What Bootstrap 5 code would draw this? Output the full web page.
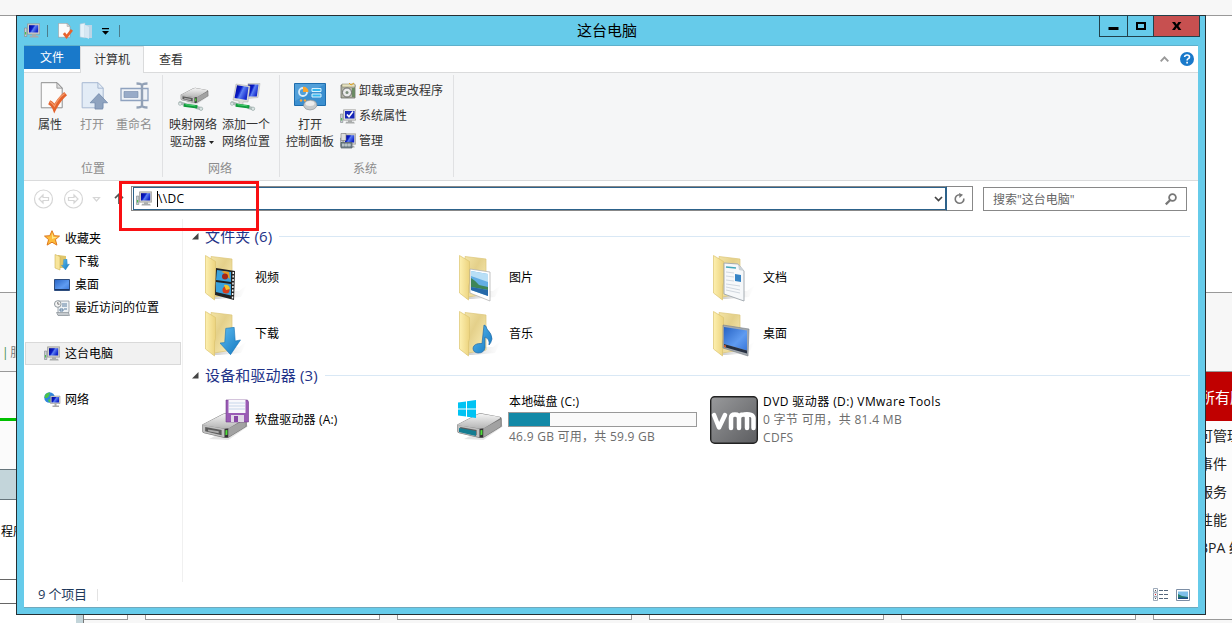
<!DOCTYPE html>
<html lang="zh-CN">
<head>
<meta charset="utf-8">
<title>这台电脑</title>
<link rel="stylesheet" href="https://cdn.jsdelivr.net/npm/bootstrap@5.3.0/dist/css/bootstrap.min.css">
<script src="https://cdn.jsdelivr.net/npm/bootstrap@5.3.0/dist/js/bootstrap.bundle.min.js"></script>
<style>
body{width:1232px;height:623px;overflow:hidden;position:relative;background:#fff;font:12px/17px "Open Sans","Noto Sans CJK SC",sans-serif;color:#000;white-space:nowrap}
svg{display:block;flex:none;overflow:visible}
/* server manager behind the window */
.desk{height:623px;overflow:hidden}
.desk-top{height:16px;background:#f7f7f7;border-bottom:1px solid #999;flex:none}
.rail{width:84px;border-right:1px solid #777}
.rail>div,.tile-r>div{flex:none}
.rail-foot{height:20px;margin-left:76px;background:#c3d5da}
.tiles{background:#f7f7f7;gap:17px;min-width:0;overflow:hidden}
.tile-box{width:235px;flex:none;background:#fff;border:1px solid #999;height:604px}
.tile-r{width:26px;position:absolute;right:0;top:16px;height:607px;background:#f7f7f7;overflow:hidden;font-size:14px;line-height:28px;color:#222}
.tile-r .shift{margin-left:-7px}
/* window */
.win{position:absolute;left:16px;top:15px;width:1190px;height:600px;background:#66cbea;border:1px solid #262f33}
.titlebar{height:30px}
.qat{position:absolute;left:7px;top:6px;height:18px}
.wtitle{font-size:15px;line-height:28px;padding-right:8px}
.capt{position:absolute;right:5px;top:-1px;height:22px}
.capt>div{border:1px solid #21414b;margin-left:-1px}
.client{margin:0 7px;height:561px;background:#fff;box-shadow:0 -1px 0 #5eb0cb,0 1px 0 #6fa9bd}
.tabs{height:27px;border-bottom:1px solid #dadbdc;color:#333}
.tab-file{width:56px;height:23px;background:#1979ca;color:#fff;line-height:23px}
.tab-on{width:64px;height:27px;background:#f5f6f7;border:1px solid #dadbdc;border-bottom:0;line-height:25px}
.ribbon{height:108px;background:#f5f6f7;border-bottom:1px solid #dadbdc;color:#333}
.rgroup{border-right:1px solid #e0e1e3;margin:2px 0 3px;height:102px;position:relative}
.rgroup .cap{color:#8c8c8c;height:17px;margin-top:auto}
.rbtn{line-height:17px}
.rbtn svg{margin-bottom:5px}
.dis{color:#8f8f8f}
.addr{height:38px;padding-top:5px}
.abox{width:816px;height:25px;border:1px solid #888;border-right-color:#2c628b}
.abox .inn{border:1px solid #2c628b;margin:0 0 0 1px;height:23px}
.rbox{width:26px;height:25px;border:1px solid #888;border-left:0}
.sbox{width:204px;height:24px;border:1px solid #888;color:#666;margin-top:1px}
.side{width:159px;border-right:1px solid #f0f0f0;padding-top:8px}
.side>div{height:23px}
.side .sel{background:#f1f1f1;border:1px solid #d9d9d9;margin-left:1px;margin-right:1px}
.ghead{font-size:15px;line-height:20px;height:20px;color:#1e3287}
.ghead .rule{height:1px;background:#d9e8f5}
.cellx{width:254px;height:56px;flex:none}
.folders .cellx svg{margin:2px -1px 0 1px}
.sub{color:#6d6d6d}
.dev{line-height:18px}
.dev .sub{letter-spacing:.2px}
.cap-bar{width:189px;height:15px;border:1px solid #999;background:#fafafa;margin-left:-1px}
.cap-bar div{height:13px;background:#1389a7}
.status{height:25px;font-size:13px;line-height:17px;color:#1e395b}
.redmark{position:absolute;left:119px;top:181px;width:140px;height:50px;border:3px solid #f90f12}
</style>
</head>
<body>
<svg width="0" height="0" class="position-absolute">
<defs>
<linearGradient id="gb" x1="0" y1="0" x2="1" y2=".5"><stop offset="0" stop-color="#02068c"/><stop offset=".45" stop-color="#0a1cc8"/><stop offset=".6" stop-color="#5c80f2"/><stop offset="1" stop-color="#1226cc"/></linearGradient>
<linearGradient id="gf" x1="0" y1="0" x2="1" y2="0"><stop offset="0" stop-color="#fdf0b0"/><stop offset="1" stop-color="#ecd37e"/></linearGradient>
<linearGradient id="gk" x1="0" y1="0" x2="1" y2="1"><stop offset="0" stop-color="#f3e4a6"/><stop offset=".4" stop-color="#e4d08a"/><stop offset="1" stop-color="#fdf1bc"/></linearGradient>
<linearGradient id="gd" x1="0" y1="0" x2="0" y2="1"><stop offset="0" stop-color="#f4f4f4"/><stop offset="1" stop-color="#b5b5b5"/></linearGradient>
<linearGradient id="ga" x1="0" y1="0" x2="1" y2="1"><stop offset="0" stop-color="#5dbcf0"/><stop offset="1" stop-color="#1277c0"/></linearGradient>
<linearGradient id="gs" x1="0" y1="0" x2="1" y2="1"><stop offset="0" stop-color="#2763c4"/><stop offset=".6" stop-color="#5f9bf0"/><stop offset="1" stop-color="#3a78dc"/></linearGradient>
<linearGradient id="gv" x1="0" y1="0" x2="1" y2="1"><stop offset="0" stop-color="#999a9c"/><stop offset="1" stop-color="#5c5d60"/></linearGradient>
<linearGradient id="gsh" x1="0" y1="0" x2="1" y2="0"><stop offset="0" stop-color="#bbb" stop-opacity=".8"/><stop offset="1" stop-color="#ddd" stop-opacity="0"/></linearGradient>
<symbol id="pc" viewBox="0 0 16 16"><path d="M.5 5h2.300v8.500H.5z" fill="#c9ced2" stroke="#7d868c" stroke-width=".6"/><path d="M1.100 9h1v2.500h-1z" fill="#3fc13f"/><path d="M3.500.8h12.200v10.400H3.500z" fill="#cfcfca" stroke="#8c8c88" stroke-width=".6"/><path d="M5 2.200h9.200v7.300H5z" fill="url(#gb)"/><path d="M8 11.200h4v1.600H8zM6 12.800h8l.8 1.700H5.500z" fill="#a9acac"/></symbol>
<symbol id="fold" viewBox="0 0 48 48"><path d="M10 45l10-8h17l8-6-6 12-22 2z" fill="url(#gsh)"/><path d="M9 2.500l21 2.500v35L12 43z" fill="url(#gk)" stroke="#dcc678" stroke-width=".7"/><path d="M3.500 1.500L13.500 7.500v21l-1 3.500v14L3.500 39z" fill="url(#gf)" stroke="#dcc470" stroke-width=".7"/></symbol>
<symbol id="drive" viewBox="0 0 48 30"><path d="M8 28l20 1 20-14-2-6z" fill="#ccc" opacity=".5"/><path d="M1 13L22 2q2-1 5-.5L45 5q2 .5 2 2v8L29 26q-2 1.300-5 .8L3 22q-2-.5-2-2z" fill="#777"/><path d="M1.500 13L22 2.500q2-1 5-.5L44 5q2.500.8.500 2L29 16.500q-2 1-5 .5L3 14z" fill="url(#gd)"/><path d="M1.500 13.500L25 17.500v9L3 21.500q-1.500-.5-1.500-2z" fill="#c0c0c0"/><path d="M4 15.500l17 3v5.500L4 20z" fill="#5b5b5b"/><path d="M7 18l11 2v2L7 20z" fill="#aaa"/><path d="M24 17.500l4-.5v9l-4 .5z" fill="#333"/><path d="M25 19l2-.4v5l-2 .4z" fill="#4fe03a"/><path d="M28 17l18-9.500V15l-18 11z" fill="#a2a2a2"/></symbol>
<symbol id="pipe" viewBox="0 0 28 11"><path d="M2 2l6 2M20 7l5 1.500" stroke="#aebcb9" stroke-width="3.500" stroke-linecap="round"/><path d="M6 4.500l15 2" stroke="#0f9b3b" stroke-width="3.800"/><path d="M8 4l11 1.400" stroke="#54d77b" stroke-width="1"/><circle cx="2" cy="3" r="1.800" fill="#dbe5e4" stroke="#8fa09e" stroke-width=".6"/><circle cx="25" cy="8.500" r="1.900" fill="#dbe5e4" stroke="#8fa09e" stroke-width=".6"/></symbol>
<symbol id="docu" viewBox="0 0 28 30"><path d="M.7.700h16.500l5.300 5.500v20.500H.7z" fill="#fbfbfb" stroke="#8a8a8a" stroke-width="1"/><path d="M17 .7v5.700h5.500z" fill="#ddd" stroke="#8a8a8a" stroke-width=".8"/></symbol>
<symbol id="arr" viewBox="0 0 20 26"><path d="M5.500 1l8-1 1 13 5-1L10 26 0 15l4.500-.5z" fill="url(#ga)" stroke="#1b76b8" stroke-width=".6"/></symbol>
</defs></svg>

<div class="desk d-flex flex-column">
  <div class="desk-top"></div>
  <div class="d-flex flex-grow-1">
    <div class="rail d-flex flex-column flex-shrink-0">
      <div style="height:276px"></div>
      <div style="height:80px;background:#f7f7f7;border:solid #999;border-width:1px 0;padding:51px 0 0 2px;color:#777;letter-spacing:-.2px"><span style="color:#3f8f3f;margin-right:-1px">|</span> 服务</div>
      <div style="height:46px;background:#fbfbfb"></div>
      <div style="height:3px;background:#00c000"></div>
      <div style="height:48px;background:#fbfbfb"></div>
      <div style="height:31px;background:#c3d5da;border:solid #66757b;border-width:1px 0"></div>
      <div style="height:79px;padding:23px 0 0 1px">程序</div>
      <div style="height:25px;border:solid #666;border-width:1px 0"></div>
      <div class="rail-foot"></div>
    </div>
    <div class="tiles d-flex">
      <div class="tile-box border-start-0" style="width:44px"></div>
      <div class="tile-box"></div><div class="tile-box"></div><div class="tile-box"></div><div class="tile-box"></div><div class="tile-box"></div>
    </div>
  </div>
</div>
<div class="tile-r d-flex flex-column">
  <div style="height:276px;background:#fff"></div>
  <div style="height:80px;border:solid #999;border-width:1px 0"></div>
  <div style="height:49px;background:#c00000;color:#fff;font-size:15px;line-height:50px"><div style="margin-left:-6px">所有服务器</div></div>
  <div style="height:199px;background:#fcfcfc;border-bottom:1px solid #999;padding-top:1px">
    <div class="shift">可管理性</div><div class="shift">事件</div><div class="shift">服务</div><div class="shift">性能</div><div class="shift">BPA 结果</div>
  </div>
</div>

<div class="win">
  <div class="titlebar position-relative text-center">
    <div class="qat d-flex align-items-center">
      <svg width="16" height="16"><use href="#pc"/></svg>
      <svg width="1" height="12" style="margin-left:7px"><path fill="#4c7d8c" d="M0 0h1v12H0z"/></svg>
      <svg width="15" height="16" viewBox="0 0 28 30" style="margin-left:10px"><use href="#docu" width="28" height="30"/><path d="M11 19l5 7L26 13" fill="none" stroke="#e8622c" stroke-width="5"/></svg>
      <svg width="14" height="16" viewBox="0 0 14 16" style="margin-left:6px"><path d="M1 1l5-1v15l-5-1z" fill="#e4f1f9" stroke="#a8c6d8" stroke-width=".6"/><path d="M6 2h7v13H6z" fill="#bcd5e6"/><path d="M6 2l4 2v12l-4-2z" fill="#d6e7f3"/></svg>
      <svg width="7" height="8" viewBox="0 0 7 8" style="margin-left:9px;margin-top:2px"><path d="M0 0h7v1.200H0zM0 3h7L3.500 6.800z"/></svg>
      <svg width="1" height="12" style="margin-left:10px"><path fill="#4c7d8c" d="M0 0h1v12H0z"/></svg>
    </div>
    <div class="wtitle">这台电脑</div>
    <div class="capt d-flex">
      <div style="width:29px"><svg width="27" height="20"><path d="M8.500 11h10v3h-10z"/></svg></div>
      <div style="width:27px"><svg width="25" height="20"><path d="M9 7h8v6H9z" fill="none" stroke="#000" stroke-width="2"/></svg></div>
      <div style="width:47px;background:#c75050"><svg width="45" height="20"><path d="M18 6h3l1.700 2.500L24.400 6h3l-3 4 3 4h-3l-1.700-2.500L21 14h-3l3-4z"/></svg></div>
    </div>
  </div>
  <div class="client d-flex flex-column">
    <div class="tabs d-flex text-center flex-shrink-0">
      <div class="tab-file">文件</div><div class="tab-on">计算机</div><div style="width:54px;line-height:27px">查看</div>
      <div class="ms-auto d-flex align-items-center" style="gap:11px;padding-right:4px">
        <svg width="9" height="6" viewBox="0 0 9 6"><path d="M.7 5.300l3.800-4 3.800 4" fill="none" stroke="#999" stroke-width="1.900"/></svg>
        <svg width="14" height="14" viewBox="0 0 14 14"><circle cx="7" cy="7" r="7" fill="#1979ca"/><path d="M4.600 5q.2-2 2.500-2t2.400 1.900q0 1.100-1.200 1.700-1.200.6-1.200 1.900M7.100 9.800v1.700" fill="none" stroke="#fff" stroke-width="1.600"/></svg>
      </div>
    </div>
    <div class="ribbon d-flex flex-shrink-0 text-center">
      <div class="rgroup d-flex flex-column" style="width:139px">
        <div class="d-flex" style="padding:7px 0 0 6px">
          <div class="rbtn" style="width:40px"><svg width="28" height="29" viewBox="0 0 28 30" style="margin-left:10px"><use href="#docu" width="28" height="30"/><path d="M9 21q4 2 5.500 6Q19 18 26 12" fill="none" stroke="#e4632d" stroke-width="4.500"/><path d="M10 20.500q3 2 4.500 4.500Q18 17 25 12" fill="none" stroke="#f29a6b" stroke-width="1.300"/></svg>属性</div>
          <div class="rbtn dis" style="width:44px"><svg width="28" height="29" viewBox="0 0 28 30" style="margin-left:11px"><path d="M.7.700h16.500l5.300 5.500v20.500H.7z" fill="#e3ecf6" stroke="#a5b6d0"/><path d="M17 .7v5.700h5.500" fill="none" stroke="#a5b6d0"/><path d="M18 12l9 9.500h-5V28h-8v-6.500H9z" fill="#8fa3bf" stroke="#7188aa" stroke-width=".8"/></svg>打开</div>
          <div class="rbtn dis" style="width:40px"><svg width="30" height="29" viewBox="0 0 30 29" style="margin-left:6px"><path d="M1 6.500h27v12H1z" fill="#eef2f7" stroke="#8fa2bf" stroke-width="1.300"/><path d="M4 9.500h14v6H4z" fill="#98abc8" stroke="#7389aa" stroke-width=".6"/><path d="M16.500 1.500q5 0 5.500 2 .5-2 5.500-2M22 3v21M16.500 25.500q5 0 5.500-2 .5 2 5.500 2" fill="none" stroke="#92a1b6" stroke-width="2.400"/></svg>重命名</div>
        </div>
        <div class="cap">位置</div>
      </div>
      <div class="rgroup d-flex flex-column" style="width:117px">
        <div class="d-flex" style="padding:7px 0 0 3px">
          <div class="rbtn" style="width:54px"><svg width="34" height="29" viewBox="0 0 34 29" style="margin-left:10px"><use href="#drive" x="4" y="5" width="29" height="18"/><use href="#pipe" x="1" y="19" width="28" height="10"/></svg>映射网络<br><span style="margin-left:-2px">驱动器</span> <svg class="d-inline-block m-0" style="vertical-align:2px" width="5" height="3"><path d="M0 0h5L2.500 3z" fill="#222"/></svg></div>
          <div class="rbtn" style="width:52px"><svg width="34" height="29" viewBox="0 0 34 29" style="margin-left:8px"><path d="M20 1.500l12 0-2 14-11 1z" fill="#dcddd8" stroke="#aaa" stroke-width=".5"/><path d="M20 2.500l10.500 0-1.700 12H20z" fill="url(#gb)"/><path d="M8 2l14 2-2 16H15v3h-4v-4l-6-1z" fill="#dcddd8" stroke="#aaa" stroke-width=".5"/><path d="M9 3.200l11.500 1.700-1.800 13L6.500 16z" fill="url(#gb)"/><use href="#pipe" x="1" y="19" width="28" height="10"/></svg>添加一个<br>网络位置</div>
        </div>
        <div class="cap" style="padding-right:2px">网络</div>
      </div>
      <div class="rgroup d-flex flex-column" style="width:174px">
        <div class="d-flex" style="padding:7px 0 0 4px">
          <div class="rbtn" style="width:52px"><svg width="32" height="29" viewBox="0 0 32 29" style="margin-left:10px"><path d="M.5 1.500h31v22H.5z" fill="#3b8fd0" stroke="#1e6dad"/><path d="M1 2h30L1 19z" fill="#76b9e8" opacity=".4"/><circle cx="9" cy="10" r="4" fill="none" stroke="#d8ecfa" stroke-width="1.800"/><path d="M9 4.500a5.500 5.500 0 0 1 5.500 5.500H9z" fill="#fba52d"/><path d="M18 6.500h9v3h-9zM18 12h9v3h-9z" fill="#34b7f0" stroke="#d8f1fd"/><circle cx="7" cy="18.500" r="1.200" fill="#f9a63a"/><circle cx="11" cy="18.500" r="1.200" fill="#f9a63a"/><path d="M9.500 24q.5-6 7-6t6.500 6q-2 4-7 4t-6.500-4z" fill="#c7cacc" stroke="#888e92" stroke-width=".6"/><ellipse cx="16" cy="21.500" rx="4.500" ry="2.500" fill="#ececec"/></svg>打开<br>控制面板</div>
          <div class="text-start" style="margin-left:4px">
            <div class="d-flex" style="height:25px;gap:3px"><svg width="16" height="16" viewBox="0 0 16 16" style="margin-top:1px"><path d="M1 2h14v13H1z" fill="#b0b2a5" stroke="#5c5d54" stroke-width=".7"/><path d="M2 1h13v3H2z" fill="#e7e3c1" stroke="#787459" stroke-width=".5"/><path d="M9 0l2 2 3-2" stroke="#e0a020" fill="none"/><path d="M12 5h3v9h-3z" fill="#6b8a63"/><circle cx="7" cy="9.500" r="4.500" fill="#eaeaea" stroke="#555" stroke-width=".8"/><circle cx="7" cy="9.500" r="1.500" fill="#7b8d7b"/></svg>卸载或更改程序</div>
            <div class="d-flex" style="height:25px;gap:3px"><svg width="16" height="16" viewBox="0 0 16 16" style="margin-top:2px"><use href="#pc" width="16" height="16"/><path d="M4.500 1.500h10.500v8.500h-10.500z" fill="#1526b6" stroke="#ddd"/><path d="M7 5.500l2 2.300L13 2.500" fill="none" stroke="#fff" stroke-width="1.600"/></svg>系统属性</div>
            <div class="d-flex" style="height:25px;gap:3px"><svg width="16" height="16" viewBox="0 0 16 16" style="margin-top:1px"><use href="#pc" width="16" height="16"/><path d="M1 .5h5v7H1z" fill="#ddd" stroke="#777" stroke-width=".6"/><path d="M1 9.500h11v5.500H1z" fill="#76868e" stroke="#505d64" stroke-width=".7"/><path d="M2 12h9M3 10.500v3M6 10.500v3M9 10.500v3" stroke="#e0e6e8" stroke-width=".8"/></svg>管理</div>
          </div>
        </div>
        <div class="cap" style="padding-right:3px">系统</div>
      </div>
    </div>
    <div class="addr d-flex flex-shrink-0">
      <svg width="107" height="24" viewBox="0 0 107 24"><g fill="none" stroke="#d6d6d6" stroke-width="1.200"><circle cx="19.500" cy="13" r="9"/><circle cx="49.500" cy="13" r="9"/><path d="M19 9l-4 4 4 4v-2.500h5.500v-3H19zM50 9l4 4-4 4v-2.500h-5.500v-3H50z"/><path d="M69.500 11.500h6l-3 3.500z"/></g><path d="M95 18V8.500M91 12.200l4-4 4 4" fill="none" stroke="#555" stroke-width="1.700"/></svg>
      <div class="abox"><div class="inn d-flex align-items-center"><svg width="16" height="16" style="margin-left:2px"><use href="#pc"/></svg><span style="border-left:1px solid #000;margin-left:5px;line-height:16px;letter-spacing:.3px">\\DC</span><svg class="ms-auto" width="9" height="6" viewBox="0 0 9 6" style="margin-right:2px"><path d="M1 1l3.500 3.500L8 1" fill="none" stroke="#444" stroke-width="1.700"/></svg></div></div>
      <div class="rbox d-flex align-items-center justify-content-center"><svg width="11" height="11" viewBox="0 0 11 11"><path d="M9.800 5.500A4.300 4.300 0 1 1 5.500 1.700" fill="none" stroke="#777" stroke-width="1.600"/><path d="M5 0l4 1.800L5.500 5z" fill="#777"/></svg></div>
      <div class="sbox d-flex align-items-center justify-content-between" style="margin-left:10px;padding:0 9px 0 9px"><span>搜索"这台电脑"</span><svg width="12" height="12" viewBox="0 0 12 12"><circle cx="7.500" cy="4.500" r="3.400" fill="none" stroke="#777" stroke-width="1.800"/><path d="M5 7.200L.8 11.400" stroke="#777" stroke-width="2.200"/></svg></div>
    </div>
    <div class="d-flex flex-grow-1">
      <div class="side flex-shrink-0">
        <div class="d-flex align-items-center" style="padding-left:20px;gap:5px"><svg width="16" height="16" viewBox="0 0 16 16" style="margin-top:-2px"><path d="M8 .7l2.200 5 5.300.4-4.100 3.500 1.500 5.500L8 12.200l-4.900 2.900 1.500-5.500L.5 6.100l5.300-.4z" fill="#fdbd3c" stroke="#df781c"/><path d="M8 3l1.300 4H14L8 9z" fill="#ffe68d"/></svg>收藏夹</div>
        <div class="d-flex align-items-center" style="padding-left:30px;gap:5px"><svg width="16" height="16" viewBox="0 0 16 16"><path d="M4 1l8 1v12H4z" fill="#dfc56a"/><path d="M1 .5l5 2V16l-5-2z" fill="#f8e59b" stroke="#cfb158" stroke-width=".6"/><use href="#arr" x="7" y="5" width="9" height="11"/></svg>下载</div>
        <div class="d-flex align-items-center" style="padding-left:30px;gap:5px"><svg width="16" height="16" viewBox="0 0 16 16"><path d="M.5 2.500h15v11H.5z" fill="url(#gs)" stroke="#2e4d7e"/><path d="M1 12h14v1H1z" fill="#193666"/></svg>桌面</div>
        <div class="d-flex align-items-center" style="padding-left:30px;gap:5px"><svg width="16" height="16" viewBox="0 0 16 16"><path d="M4 1h11v10l-1 4H4z" fill="#eef2f5" stroke="#8b969e" stroke-width=".8"/><path d="M8 4h5M8 6h5M6 9h3v2H6zM10 9h3" stroke="#5c7ea0" fill="none"/><path d="M2.500 12.500h12l1 3H4z" fill="#c5cace" stroke="#7e878d" stroke-width=".6"/><circle cx="3.800" cy="4" r="3.300" fill="#f5f5f5" stroke="#8e979d"/><path d="M3.800 2v2.200h1.700" stroke="#555" fill="none" stroke-width=".8"/></svg>最近访问的位置</div>
        <div></div>
        <div class="sel d-flex align-items-center" style="padding-left:18px;gap:5px"><svg width="16" height="16"><use href="#pc"/></svg>这台电脑</div>
        <div></div>
        <div class="d-flex align-items-center" style="padding-left:20px;gap:5px"><svg width="16" height="16" viewBox="0 0 16 16"><circle cx="5.500" cy="5.500" r="5.300" fill="#2f86dd"/><path d="M1 3q2-3 5-2.500L5 4 3 6 .7 6zM5 7l3 1-2 2.500L4 9z" fill="#4bc549"/><path d="M6.500 4H16v7.500H6.500z" fill="#d2d3d0" stroke="#888" stroke-width=".5"/><path d="M7.500 5H15v5.500H7.500z" fill="url(#gb)"/><path d="M10.500 11.500h2v2h-2zM8.500 13.500H15V15H8.500z" fill="#aaa"/></svg>网络</div>
      </div>
      <div class="flex-grow-1" style="padding:7px 8px 0 9px">
        <div class="ghead d-flex align-items-center"><svg width="7" height="7" style="margin-right:6px"><path d="M6.500 0v6.500H0z" fill="#444"/></svg><span style="letter-spacing:.15px">文件夹 (6)</span><div class="rule flex-grow-1" style="margin-left:7px;margin-top:1px"></div></div>
        <div class="folders d-flex flex-wrap" style="padding:3px 0 0 9px">
          <div class="cellx d-flex align-items-center" style="gap:6px"><svg width="48" height="48" viewBox="0 0 48 48"><use href="#fold"/><g transform="translate(14 14)"><path d="M0 0l19 3-1 29L-1 27z" fill="#222"/><path d="M1 2l14 2v10L0 12zM0 14l15 2v11.500L0 24z" fill="#3aa2dd"/><path d="M2 5q5-3 8 3l4 3-1-7-5-1z" fill="#e89920"/><circle cx="9" cy="8.500" r="3" fill="#a22719"/><circle cx="10" cy="22" r="3.500" fill="#d73e1d"/><path d="M8 17q5-1 6 4l-4 1z" fill="#f6c329"/><path d="M17.300 4l-.8 27" stroke="#f5f5f5" stroke-width="1.500" stroke-dasharray="2 1.500"/></g></svg>视频</div>
          <div class="cellx d-flex align-items-center" style="gap:6px"><svg width="48" height="48" viewBox="0 0 48 48"><use href="#fold"/><path d="M14 15l20 3v29l-20-8z" fill="#fff" stroke="#aaa" stroke-width=".7"/><path d="M15 17l17 3v22l-17-6z" fill="#63aee4"/><path d="M15 17l17 3v8L15 22z" fill="#b9dff6"/><path d="M15 24q5 3 8 7l9 2v3L15 33z" fill="#3f8657"/><path d="M15 33l17 3v6l-17-6z" fill="#2669a8"/></svg>图片</div>
          <div class="cellx d-flex align-items-center" style="gap:6px"><svg width="48" height="48" viewBox="0 0 48 48"><use href="#fold"/><path d="M14 9l14 1 6 7v30l-20-7z" fill="#f6f8fa" stroke="#9da5ac" stroke-width=".9"/><path d="M28 10l1 6 5 1z" fill="#ccd3d8"/><path d="M16 13l10 1" stroke="#43a7bb" stroke-width="1.600"/><path d="M16 18l8 1m-8 3l8 1m-8 3l8 1m-8 3l14 2m-14 1l14 3m-14 0l14 3" stroke="#d0d7df"/><path d="M25 20l6 1v7l-6-1z" fill="#3684c6"/></svg>文档</div>
          <div style="width:200px"></div>
          <div class="cellx d-flex align-items-center" style="gap:6px"><svg width="48" height="48" viewBox="0 0 48 48"><use href="#fold"/><use href="#arr" x="18" y="17" width="21" height="28"/></svg>下载</div>
          <div class="cellx d-flex align-items-center" style="gap:6px"><svg width="48" height="48" viewBox="0 0 48 48"><use href="#fold"/><path d="M28 15q2 0 3 4 5 5 5 10-1 4-3 6 1-6-4-8v11q-1 5-7 5-5-.5-5-5 1-5 9-4.500z" fill="url(#ga)" stroke="#246ca9" stroke-width=".7"/></svg>音乐</div>
          <div class="cellx d-flex align-items-center" style="gap:6px"><svg width="48" height="48" viewBox="0 0 48 48"><use href="#fold"/><path d="M13 15l26 4-1 27-25-8z" fill="#a3a9af" stroke="#777e86" stroke-width=".6"/><path d="M14 17l23 3.500v20L14 34z" fill="url(#gs)"/><path d="M14 34l23 6.500v3L14 37z" fill="#273142"/><path d="M14 35l2 .5v2l-2-.7z" fill="#e05f2d"/></svg>桌面</div>
        </div>
        <div class="ghead d-flex align-items-center" style="margin-top:4px"><svg width="7" height="7" style="margin-right:6px"><path d="M6.500 0v6.500H0z" fill="#444"/></svg><span style="letter-spacing:.15px">设备和驱动器 (3)</span><div class="rule flex-grow-1" style="margin-left:7px;margin-top:1px"></div></div>
        <div class="d-flex" style="padding:7px 0 0 9px">
          <div class="cellx d-flex align-items-center" style="gap:6px"><svg width="48" height="48" viewBox="0 0 48 48"><use href="#drive" x="0" y="16" width="47" height="29"/><path d="M25 4h21.500l1 2v20H25z" fill="#9a5bb5" stroke="#70398b" stroke-width=".6"/><path d="M27.500 4h17v13h-17z" fill="#f8f8fc"/><path d="M28 7h16M28 10h16M28 13h16" stroke="#c7d6ea"/><path d="M30 19h13v7H30z" fill="#e0d9e6"/><path d="M33 20h4v6h-4z" fill="#8746a5"/></svg><span style="padding-bottom:2px;letter-spacing:.15px">软盘驱动器 (A:)</span></div>
          <div class="cellx d-flex align-items-center" style="gap:6px"><svg width="48" height="48" viewBox="0 0 48 48"><use href="#drive" x="1" y="16" width="47" height="29"/><path d="M4 32l17 3v5L4 36z" fill="#157c91"/><path d="M3 6.500l8-1v7H3zM12 5.300L21 4v8.500h-9zM3 13.500h8v7l-8-1zM12 13.500h9V22l-9-1.300z" fill="#00c3f3"/></svg>
            <div class="dev"><div style="letter-spacing:.15px">本地磁盘 (C:)</div><div class="cap-bar" style="margin-top:1px"><div style="width:21.700%"></div></div><div class="sub" style="line-height:20px;letter-spacing:.26px">46.9 GB 可用，共 59.9 GB</div></div></div>
          <div class="cellx d-flex align-items-center" style="gap:5px;padding-left:1px"><svg width="48" height="48" viewBox="0 0 48 48"><rect x=".7" y=".7" width="46.600" height="46.600" rx="4" fill="url(#gv)" stroke="#222" stroke-width="1.400"/><path d="M4 19l5 12.500L15 19M21 32V22q0-3.500 4-3.500t4 3.500v10M29 22q0-3.500 5-3.500M37 32V22q0-3.500-3-3.500 9-1 9.500 3.500v10" fill="none" stroke="#fff" stroke-width="4.500" stroke-linecap="round" stroke-linejoin="round"/></svg>
            <div class="dev"><span style="letter-spacing:.42px">DVD 驱动器 (D:) VMware Tools</span><br><span class="sub" style="letter-spacing:.32px">0 字节 可用，共 81.4 MB<br>CDFS</span></div></div>
        </div>
      </div>
    </div>
    <div class="status d-flex align-items-center flex-shrink-0" style="padding:0 8px 0 14px">
      <span style="letter-spacing:-.2px">9 个项目</span><svg width="1" height="12" style="margin-left:10px"><path fill="#e3e3e3" d="M0 0h1v12H0z"/></svg>
      <svg class="ms-auto" width="15" height="13" viewBox="0 0 15 13"><g fill="#fff" stroke="#8796a8" stroke-width=".8"><path d="M.5.500h4v3.500h-4zM.5 4.800h4v3.500h-4zM.5 9h4v3.500h-4z"/></g><path d="M2 2h1v1H2zM2 10h1v1H2z" fill="#555"/><path d="M2 6h1v1H2z" fill="#d22"/><path d="M6 2.500h4M11 2.500h4M6 6.500h4M11 6.500h4M6 10.500h4M11 10.500h4" stroke="#55677d"/></svg>
      <svg width="14" height="12" viewBox="0 0 14 12" style="margin-left:8px"><path d="M.5.500h13v11H.5z" fill="#fff" stroke="#7c8ea5"/><path d="M2 2.500h10v7H2z" fill="#7fc0ea"/><path d="M2 5l4 2 6 1v1.500H2z" fill="#267e6d"/><path d="M2 8.500h10v1.500H2z" fill="#1f4f8b"/></svg>
    </div>
  </div>
</div>
<div class="redmark"></div>
</body>
</html>
